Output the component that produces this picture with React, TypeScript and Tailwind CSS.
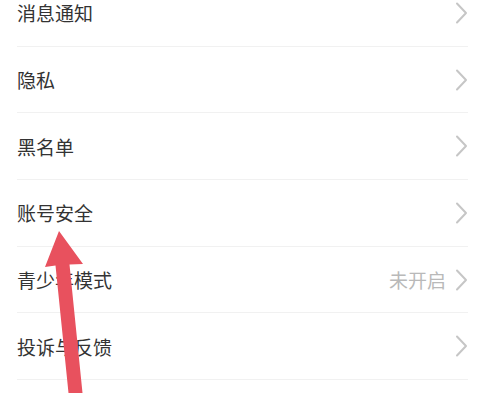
import React from 'react';

interface SettingRow {
    label: string;
    value?: string;
}

const rows: SettingRow[] = [
    { label: '消息通知' },
    { label: '隐私' },
    { label: '黑名单' },
    { label: '账号安全' },
    { label: '青少年模式', value: '未开启' },
    { label: '投诉与反馈' },
];

const Chevron = () => (
    <svg width="13" height="22" viewBox="0 0 13 22" className="shrink-0">
        <path d="M2 1.5 L11 11 L2 20.5" fill="none" stroke="#c6c6c6" strokeWidth="2" strokeLinecap="round" strokeLinejoin="round" />
    </svg>
);

export default function App() {
    return (
        <div className="relative w-[483px] h-[393px] overflow-hidden bg-white font-['Noto_Sans_CJK_SC','Noto_Sans',sans-serif]">
            <div className="flex flex-col -mt-[20px] pl-[17px] pr-[15px]">
                {rows.map((row) => (
                    <div key={row.label} className="flex items-center justify-between h-[66.7px] border-b border-[#f1f1f1] pr-0">
                        <span className="text-[19px] leading-none text-[#333333]">{row.label}</span>
                        <div className="flex items-center gap-[9px]">
                            {row.value && (
                                <span className="text-[19px] leading-none text-[#b9b9b9]">{row.value}</span>
                            )}
                            <Chevron />
                        </div>
                    </div>
                ))}
            </div>

            {/* red annotation arrow over the list */}
            <svg className="absolute left-0 top-0 pointer-events-none" width="483" height="393" viewBox="0 0 483 393">
                <polygon
                    points="59,231 83,264 69.5,264.5 82.5,393 68.5,393 55.5,265.5 45,267"
                    fill="#e8515e"
                />
            </svg>
        </div>
    );
}
